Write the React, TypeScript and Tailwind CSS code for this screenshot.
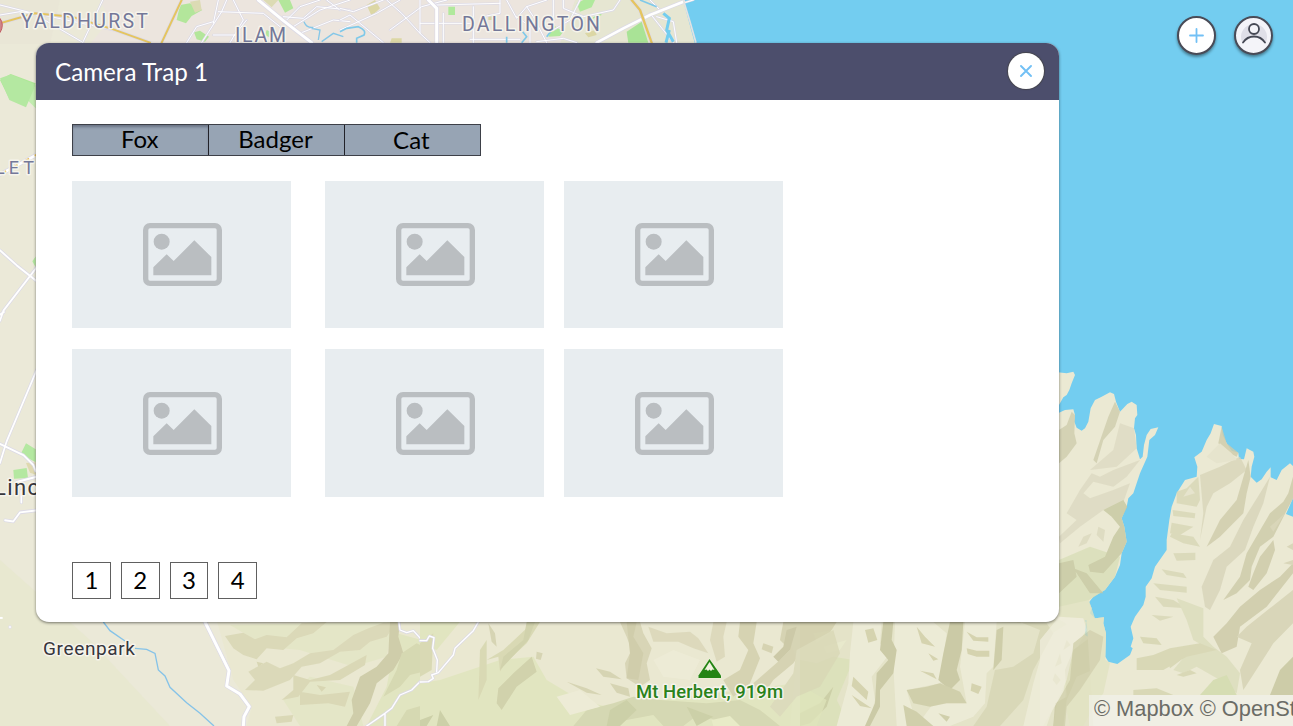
import React from 'react';

const tabs = [
  { name: 'Fox', cls: 'pb-[3px] shadow-[inset_0_3px_3px_-1px_rgba(60,65,85,0.5)]' },
  { name: 'Badger', cls: 'pb-[3px]' },
  { name: 'Cat', cls: 'pb-[1px]' },
];

function Road({ d, w = 4, c = '#ffffff' }: { d: string; w?: number; c?: string }) {
  return (
    <g fill="none" strokeLinejoin="round" strokeLinecap="round">
      <path d={d} stroke="#dcdae6" strokeWidth={w + 4} />
      <path d={d} stroke={c} strokeWidth={w} />
    </g>
  );
}

function Label(p: { x: number; y: number; size: number; w: number; fill: string; weight?: number; children: string }) {
  return (
    <text
      x={p.x}
      y={p.y}
      fontSize={p.size}
      textLength={p.w}
      fill={p.fill}
      fontWeight={p.weight ?? 500}
      fontFamily="Roboto, 'Liberation Sans', sans-serif"
      stroke="#f6f4ec"
      strokeWidth={3}
      strokeLinejoin="round"
      paintOrder="stroke"
    >
      {p.children}
    </text>
  );
}

function MapCanvas() {
  return (
    <svg className="absolute inset-0" width="1293" height="726" viewBox="0 0 1293 726" aria-hidden="true">
      <rect width="1293" height="726" fill="#ebe9d8" />
      <path d="M0 560L90 640 170 726H0z" fill="#e8e8d0" />
      <path d="M100 0H683L695 44H90L110 20z" fill="#ece5de" />
      <path d="M575 0H683L695 44H560z" fill="#e6e6d2" />
      <path d="M0 0H60L50 44H0z" fill="#e9e6d6" />
      <path d="M683 0L695 44 1050 380V560L1085 590V680H1293V0z" fill="#73cdf0" />

      {/* north-west streets */}
      <g transform="scale(.33333)">
        <path d="M540 15L570 10 607 30 575 48 558 70 530 60zM582 97L600 92 627 110 615 125 590 118zM835 0H870L880 25 855 38zM800 90L812 95 808 112 795 105z" fill="#b3e69b" />
        <path d="M570 5L600 0 605 30 585 38zM790 0H835L815 22z" fill="#dcdbb4" />
        <path d="M0 240L32 222 107 250 78 310 60 300 28 296z" fill="#aee797" />
        <path d="M82 300L107 255V325z" fill="#c2ecaf" />
        <Road d="M0 15L100 40 250 128M0 45L60 35 105 40 340 90" w={3} />
        <Road d="M308 0L248 128M680 0L665 35 605 128M640 70L655 0M640 65L590 80 560 128M655 35L790 40 840 80M700 0L730 60 690 128M720 105H640M740 60L700 110M860 60L900 20 960 0M880 80L960 30 1050 0M900 100L1000 60 1050 65M850 50L910 55 950 20 1050 30M980 0L1020 30" w={3} />
        <Road d="M775 0L850 62 935 128" w={9} />
        <Road d="M0 70L105 40 215 50 340 88 450 128M545 0L485 128" w={6} c="#e5c55f" />
        <path d="M912 65Q920 85 940 82M935 85L960 90 955 120M965 125L1000 100 1030 110" fill="none" stroke="#85c7e8" strokeWidth="4" />
        <path d="M0 55Q14 75 0 98" fill="#cf8588" stroke="#c15d64" strokeWidth="3" />
      </g>
      <g transform="translate(340 0) scale(.33333)">
        <path d="M325 20H345V45H325zM640 75L670 95 660 108 625 110zM710 10L730 0H765L755 22 720 35zM780 35L785 45 750 60z" fill="#b0e99c" />
        <path d="M860 95L905 65 925 128H865z" fill="#a9e396" />
        <path d="M80 15L105 0 120 25 95 48zM155 115H185V128H150zM735 100L765 90 770 105 745 112zM445 42H460V60H445z" fill="#dcd7a5" />
        <Road d="M0 25L40 35 130 0M0 60L30 45 130 128M0 90L110 40 180 0M140 0L185 40 240 100M150 90L245 20 320 0M240 0V70H400M240 70V100L270 128M290 15L480 10M310 40V128M400 20V128M480 0V40L440 48M500 0L530 55 560 20 620 0M530 50L570 80V128M560 20L580 50 620 128M640 0V80M640 90L690 60 720 0M390 118H540M670 0V25L730 50 820 30 840 0M590 125L670 115 710 128M930 40L1000 128M930 0L960 30 1060 0M950 50L1000 65 1010 128" w={3} />
        <Road d="M265 0L290 25V128" w={9} />
        <Road d="M1030 5L930 45 850 85 770 128" w={8} />
        <Road d="M875 0L900 30 935 128" w={7} c="#e5c55f" />
        <path d="M0 95L20 85 55 80Q80 90 72 105L50 115V128M500 128V110M548 95L560 110 545 128M640 85L620 110M900 0L950 20" fill="none" stroke="#7fc9e9" strokeWidth="5" />
        <path d="M970 40L988 55 980 90 1000 125M988 90L978 128" fill="none" stroke="#73cdf0" strokeWidth="9" />
        <path d="M1030 0L1050 65 1068 128" fill="none" stroke="#e3e2e2" strokeWidth="5" />
      </g>

      {/* western edge */}
      <g transform="translate(0 40) scale(.33333 .3953)">
        <path d="M78 1020L107 1035V1068L62 1048zM40 1088L80 1083 84 1108 42 1110zM97 560L107 548V575zM0 97L32 87 107 113 78 170 28 152z" fill="#b4e8a1" />
        <path d="M78 1070L107 1068V1100L90 1095z" fill="#dfd9b0" />
        <Road d="M0 340L110 290" w={7} />
        <path d="M0 340L110 290" stroke="#e8c160" strokeWidth="5" strokeDasharray="20 18" />
        <Road d="M0 532L50 570 110 610M110 575L10 685 0 710M0 695L12 688M110 835L20 1015 0 1070M0 1022L70 1050 100 1075 107 1090M50 1118L110 1105M64 1140V1170M15 1215L40 1218 60 1195 107 1190" w={5} />
        <circle cx="30" cy="1485" r="4" fill="#fff" stroke="#dcdae6" strokeWidth="2" />
        <path d="M0 1462H8" stroke="#fff" strokeWidth="5" />
      </g>

      {/* southern hills, west part */}
      <g transform="translate(0 600) scale(.33333)">
        <path d="M650 60H1300V378H740L755 320 700 240z" fill="#eae8d1" />
        <g opacity=".75">
          <path d="M690 75L1180 65 1160 170 1060 200 900 150 800 140zM850 300L930 230 1060 260 1090 378H900z" fill="#e3e6c4" />
          <path d="M1190 100L1300 130V378H1100L1160 260z" fill="#dfe4bc" />
          <path d="M675 108L730 98 765 118 800 105 860 112 905 70 980 66 940 100 890 115 850 150 800 145 770 178 730 165 700 145z" fill="#d6d4b0" />
          <path d="M745 215L800 185 840 205 880 190 930 160 1000 150 1060 105 1105 85 1150 68 1190 66 1160 110 1110 125 1080 150 1020 155 960 190 905 200 870 240 790 272 735 270 765 240z" fill="#d7d5b2" />
          <path d="M845 300L880 270 880 225 930 240 990 225 1100 165 1095 195 1020 240 930 245 895 290zM900 275L960 285 1050 275 1035 320 985 310 900 315zM825 350L880 345 875 365 830 370z" fill="#d5d3ae" />
          <path d="M1170 66H1200L1195 110 1210 160 1180 210 1130 250 1110 310 1070 378H1040L1060 340 1055 300 1080 230 1130 200 1165 160z" fill="#c6c49d" />
          <path d="M1205 160L1250 130 1290 150V210L1230 225 1200 260 1150 290 1190 210zM1220 330L1290 310V378H1190z" fill="#d0d4a8" />
          <path d="M950 255L978 262 965 275zM770 185L790 190 775 200z" fill="#d3d1aa" />
        </g>
        <path d="M310 66L330 92 375 123M405 145L440 148 465 160 475 210 495 228 510 262 560 308 600 340 642 378" fill="none" stroke="#86c3e8" strokeWidth="4" />
        <Road d="M615 66L687 212 680 258 720 282 748 320 732 350 730 378" w={9} />
        <Road d="M1197 66L1200 90 1220 98 1240 92 1270 125 1300 115M1300 240L1262 243 1235 270 1200 285 1175 325 1155 340 1100 378M1155 340V378" w={4} />
      </g>

      {/* southern hills, east part */}
      <g transform="translate(800 600) scale(.33333)">
        <path d="M0 60H780L880 120 900 378H0z" fill="#e4e3c8" />
        <g opacity=".8">
          <path d="M0 180L50 190 100 170 160 180 110 300 150 378H0z" fill="#dbe1b8" />
          <path d="M160 66H245L240 130 270 160 215 230 225 300 205 378H110L145 250 150 160zM285 66H400L440 100 420 250 320 270 340 340 400 378H290L280 200zM495 66H590L580 200 560 220 555 310 520 350 450 378H350L400 310 500 310 480 200z" fill="#efedda" />
          <path d="M740 110L820 60 860 66 850 110 800 200 795 300 760 320 740 378H670L700 250z" fill="#efedda" />
          <path d="M250 66H280L275 120 290 150 280 220 240 270 240 320 210 378H195L225 310 230 220 265 180 240 150zM450 66H490L485 150 470 210 480 240 450 270 415 240 430 160z" fill="#c6c59e" />
          <path d="M600 66H660L720 90 700 160 640 200 585 210 560 320 520 378H600L670 300 700 210 760 100 740 70z" fill="#d7d6b5" />
          <path d="M590 90L610 80 605 180 580 210zM820 150L900 90V200L830 230 800 300 790 378H760L765 310 800 290 795 210z" fill="#c9c8a2" />
          <path d="M500 95L530 112H565V125L520 122zM500 145L530 152H568V170H530L503 162zM350 80L375 110 405 140 365 130zM385 160L415 178 400 182zM360 212L400 220 410 238zM515 250L545 260 535 282 512 272zM160 230L205 275 200 300 155 258zM155 285L215 325 180 318zM195 90L220 85 232 120 205 128z" fill="#d2d0aa" />
          <path d="M320 270L380 260 420 250 480 275 500 310 440 310 390 320 340 310zM310 315L350 335 400 378H320zM415 340L450 350 440 365z" fill="#cccba5" />
          <path d="M780 160L785 190 765 200zM765 220L782 240 770 255 758 240zM800 120L812 135 790 150z" fill="#cfcda6" />
          <path d="M0 340L60 310 100 260 80 320 30 370 0 378z" fill="#c7cba0" />
          <path d="M70 140L140 120 120 150 80 160zM40 100L100 90 50 130z" fill="#e9ebce" />
        </g>
      </g>

      {/* southern hills, centre part */}
      <g transform="translate(420 600) scale(.33333)">
        <path d="M0 60H1090L1130 180 1110 378H0z" fill="#eae8d1" />
        <g opacity=".75">
          <path d="M0 65H120L50 150 0 130zM0 250L60 240 240 180 340 170 380 240 480 300 560 320 1130 250 1220 300 1190 378H0z" fill="#dfe5bb" />
          <path d="M0 130L40 100 35 210 0 230zM200 180L250 150 340 66H360L320 130 255 190 240 215 235 170zM180 150L200 120V240L175 300z" fill="#d4d5ab" />
          <path d="M320 66H345L325 120 240 210 250 170 310 120zM235 265L280 220 335 170 350 215 290 260 245 330 230 310z" fill="#c9cba0" />
          <path d="M205 70L225 100 230 140 215 125zM350 155L368 160 362 180 348 176zM528 205L570 215 605 238 550 230zM440 245L500 265 545 285 500 278zM570 250L625 265 630 290 590 278z" fill="#d0cea9" />
          <path d="M600 66H660L670 100 695 145 680 190 690 240 660 260 620 235 615 190 635 150 620 110z" fill="#d2cfad" />
          <path d="M620 66H650L640 110 670 160 655 240 620 235 630 160z" fill="#c8c59f" />
          <path d="M685 80L740 100 810 95 835 115 865 160 820 145 775 125 700 125zM880 66H920L910 110 915 170 890 185 870 120z" fill="#d9d5b6" />
          <path d="M960 66H1010L1000 130 1020 175 990 250 940 290 910 240 960 210 985 150 955 110z" fill="#d0cda8" />
          <path d="M1090 66H1250L1210 130 1150 145 1120 190 1060 240 1020 300 1000 250 1080 180 1110 150 1080 120z" fill="#d0cda9" />
          <path d="M1100 90L1130 80 1110 150 1075 185 1060 170 1090 140z" fill="#c2bf99" />
          <path d="M1130 150L1240 90 1260 160 1200 260 1130 290 1080 350 1050 320 1120 220z" fill="#d8d7b5" />
          <path d="M460 378L500 330 580 310 640 290 720 300 860 310 960 300 1020 330 1080 378H920L840 340 790 378H730L700 345 620 360 560 378z" fill="#cfd3a9" />
          <path d="M0 360L40 345 20 378H0zM60 330L90 378H50zM570 330L620 300 650 330 600 378H560zM800 320L880 350 830 378z" fill="#c3c99b" />
          <path d="M1030 130L1060 140 1055 160 1025 148z" fill="#d0cda8" />
          <path d="M410 290L480 270 540 320 450 345zM700 180L760 150 840 180 810 240 730 230z" fill="#efedd8" />
          <path d="M875 360L930 348 960 378H880z" fill="#e8edc4" />
        </g>
        <Road d="M175 66L160 92 105 145 100 165 55 218 35 225 40 235 25 245 0 246M0 122L20 122 28 108 42 113 38 145 52 180 50 215" w={4} />
      </g>

      {/* peninsula */}
      <g transform="translate(1040 360) scale(.33333)">
        <path d="M40 35L80 40 100 35 105 45 95 70 88 90 80 105 70 112 57 135V158L75 150 100 148 105 165 103 185 110 203 125 212 135 205 145 185 152 145 165 120 185 110 210 97 222 102 228 125 240 155 262 132 275 125 290 135 292 165 285 175 282 205 288 225 290 265 300 298 308 290 312 255 320 225 332 207 355 202 345 225 328 240 322 290 300 340 280 400 265 415 260 440 245 475 253 500 260 545 245 580 240 615 225 650 195 690 160 710 147 727 155 745 150 760 165 775 192 772 190 790 198 820 196 890 205 905 232 912 270 885 278 865 272 860 280 835 272 800 285 770 310 735 317 710V680L335 655 345 620 380 570V540L388 480 395 440 410 400 435 360 470 350 472 320 463 292 485 275 500 240 512 220 522 192 545 198 548 225 560 250 575 272 595 278 597 297 612 298 620 265 640 275 643 290 635 320 632 350 650 368 665 358 680 335 692 322V352L710 360 725 330 750 310 759 318V415L738 462 759 470V1098H160L140 780H30z" fill="#ebe9d3" />
        <g opacity=".8">
          <path d="M57 700L140 700 155 745 165 775 192 772 190 790 198 820 196 900 210 908 190 1000 160 1040 130 1098H90L70 1000 90 850 57 780z" fill="#e2e3c2" />
          <path d="M57 600L150 560 240 590 225 650 195 690 147 720 57 740z" fill="#d9dfb8" />
          <path d="M57 770L130 775 140 810 100 870 80 960 50 1030 10 1098H0V840z" fill="#efeddb" />
          <path d="M100 850L150 810 190 830 180 900 120 990 80 1040 75 1098H40L50 1030 90 960z" fill="#d1d0ac" />
          <path d="M57 310V210L80 195 95 155 105 165 103 220 110 250 80 290zM205 170L225 125 240 155 225 200 190 240 170 310 160 300z" fill="#cfcdad" />
          <path d="M240 190L282 205 290 265 230 320 150 330 220 270z" fill="#dedbc3" />
          <path d="M155 340L180 350 220 330 300 300 260 350 220 380 160 365 130 400 150 415 220 390 270 370 245 440 190 450 120 500 60 550 57 530 110 480 80 460 120 390z" fill="#dddac2" />
          <path d="M190 450L250 420 262 440 245 475 253 500 260 545 245 580 190 640 150 635 145 615 195 590 220 530 240 500 215 470zM57 610L100 600 110 650 57 700zM100 625L140 640 190 700 150 700z" fill="#c6c8a0" />
          <path d="M130 530L155 520 140 550 115 560zM175 500L195 510 190 545 170 525z" fill="#dcd9bf" />
          <path d="M410 395L440 385 475 350 480 420 470 440 410 430zM398 450L466 460 464 475 400 468zM395 488L460 500 420 525 390 520zM395 520L460 530 480 560 430 550 390 530zM400 580L466 578V600L410 602zM365 628L430 640 440 655 380 645zM340 670L440 680 440 698 360 690zM345 710L400 720 440 745 370 740zM335 765L400 770 360 782z" fill="#d8d7b6" />
          <path d="M480 345L540 320 600 290 620 330 570 370 520 400 500 440 480 540 490 460z" fill="#d9d6ba" />
          <path d="M545 200L560 250 595 278 590 290 560 275 535 250zM625 300L632 350 620 400 610 460 580 490 540 530 500 560 540 480 590 420z" fill="#cfccab" />
          <path d="M485 680L520 600 570 560 610 480 660 400 690 350 670 430 640 500 615 570 560 620 540 690 510 750 495 740z" fill="#d8d5ba" />
          <path d="M690 460L730 425 745 400 759 350V415L738 455 700 530 660 560 635 620 630 660 590 700 550 720 600 650 620 580z" fill="#cdcaa8" />
          <path d="M640 640L660 590 700 540 705 570 680 640 640 690 625 680zM560 790L600 740 660 690 720 650 759 610V640L680 740 600 800 590 860 545 880 520 830z" fill="#ccc9a7" />
          <path d="M740 560L759 550V570zM730 610L759 600V615zM690 500L735 460 700 515zM590 830L620 800 759 690V790L700 850 655 920 610 990 600 930 635 850z" fill="#d5d2b3" />
          <path d="M410 715L490 745 490 830 520 860 560 890 600 940 590 1000 540 960 470 920 430 940 400 930 450 870 510 870 460 840 440 780z" fill="#dcddbc" />
          <path d="M300 830L350 835 365 855 310 850zM290 895L340 885 390 865 480 850 530 870 440 890 370 930 290 930zM385 905L430 895 390 925zM410 945L450 930 470 940 430 950zM280 990L350 985 400 1005H280z" fill="#d5d5b0" />
          <path d="M759 890L720 930 690 1005H759z" fill="#c6c69e" />
          <path d="M520 960L560 945 590 1005H480z" fill="#d2dbac" />
          <path d="M540 250L575 280 590 300 530 310 500 290zM450 380L465 400 430 410z" fill="#e6e3cc" />
        </g>
      </g>

      <Label x={21} y={27.5} size={19.5} w={127} weight={400} fill="#747899">YALDHURST</Label>
      <Label x={235} y={41.5} size={19.5} w={51} weight={400} fill="#747899">ILAM</Label>
      <Label x={462} y={30.5} size={19.5} w={138} weight={400} fill="#747899">DALLINGTON</Label>
      <Label x={-5} y={173.5} size={18} w={39} weight={400} fill="#747899">LET</Label>
      <Label x={-6} y={495} size={22} w={45} weight={400} fill="#36363c">Linc</Label>
      <Label x={43} y={655} size={19} w={92} weight={400} fill="#36363c">Greenpark</Label>
      <Label x={636} y={697.5} size={18.5} w={147} fill="#2a821b">Mt Herbert, 919m</Label>
      <path d="M709.5 659L698.5 675.5V678H721V675.5z" fill="#248414" stroke="#edf1db" strokeWidth="1.2" paintOrder="stroke" />
      <path d="M709.5 662L704.5 670 706.5 669.5 708 671 709.5 669.5 711 671 712.5 669.5 714.5 670z" fill="#f2f2e0" />
    </svg>
  );
}

function Picture() {
  return (
    <div className="flex h-[147.5px] items-center justify-center bg-[#e8edf0]">
      <svg className="ml-px h-[63px] w-[79px]" viewBox="0 0 237 189">
        <rect x="8" y="8" width="221" height="173" rx="13" fill="none" stroke="#babec1" strokeWidth="16" />
        <circle cx="56" cy="56" r="24" fill="#babec1" />
        <path d="M31 157V133L71 94 92 114 154 52 205 102V157z" fill="#babec1" />
      </svg>
    </div>
  );
}

export default function App() {
  return (
    <div className="relative h-[726px] w-[1293px] overflow-hidden font-['Lato',sans-serif]">
      <MapCanvas />
      <div className="relative flex items-start pl-9">
        <section className="mt-[43px] flex h-[578.5px] w-[1023px] flex-col overflow-hidden rounded-[13px] bg-white shadow-[0_1px_3px_rgba(0,0,0,0.5)]">
          <header className="flex h-[56.5px] shrink-0 items-center justify-between bg-[#4c4e6c] pr-[15px] pl-[19px]">
            <h1 className="pt-px text-[24.2px] leading-8 text-white">Camera Trap 1</h1>
            <button className="flex size-[36px] items-center justify-center rounded-full bg-white shadow-[0_0_1px_1px_#45454d]">
              <svg width="12" height="12" viewBox="0 0 12 12" fill="none" stroke="#72c0f5" strokeWidth="1.9" strokeLinecap="round">
                <path d="M1 1L11 11M11 1L1 11" />
              </svg>
            </button>
          </header>
          <div className="flex grow flex-col items-start pt-[24.5px] pl-9">
            <div className="flex h-8 w-[408.5px] divide-x divide-[#222229] border border-[#3d4048] bg-[#97a4b4]">
              {tabs.map((t) => (
                <button key={t.name} className={`flex-1 pr-[1.5px] text-[24px] leading-7 text-black ${t.cls}`}>
                  {t.name}
                </button>
              ))}
            </div>
            <div className="mt-[24.7px] grid grid-cols-[219px_219px_219px] gap-y-[21.1px]">
              {[0, 1, 2, 3, 4, 5].map((i) => (
                <div key={i} className={i % 3 === 1 ? 'ml-[34.4px] w-[219px]' : i % 3 === 2 ? 'ml-[54px] w-[219px]' : ''}>
                  <Picture />
                </div>
              ))}
            </div>
            <div className="mt-[65px] flex gap-[10px]">
              {[1, 2, 3, 4].map((n) => (
                <button key={n} className="h-[37px] w-[38.8px] border border-[#606060] text-[24px] leading-8 text-black">
                  {n}
                </button>
              ))}
            </div>
          </div>
        </section>
        <nav className="ml-[118px] flex gap-[18px] pt-4">
          <button className="flex size-[39px] items-center justify-center rounded-full border-2 border-[#494b57] bg-white shadow-[0_2px_3px_rgba(0,0,0,0.4)]">
            <svg width="16" height="16" viewBox="0 0 16 16" fill="none" stroke="#72c0f5" strokeWidth="1.8" strokeLinecap="round">
              <path d="M7.500 1V14M1 7.500H14" />
            </svg>
          </button>
          <button className="flex size-[39px] items-center justify-center rounded-full border-2 border-[#494b57] bg-[#f4f4f9] shadow-[0_2px_3px_rgba(0,0,0,0.4)]">
            <svg className="shrink-0" width="36" height="36" viewBox="0 0 36 36" fill="none">
              <path d="M6 24A13 13 0 1 1 30 24Q24 18.500 18 18.500T6 24z" fill="#dfdfe8" />
              <circle cx="18" cy="11" r="5" fill="#f4f4f9" stroke="#454854" strokeWidth="1.8" />
              <path d="M7 24.500Q11 18.500 18 18.500T29 24.500" stroke="#454854" strokeWidth="1.8" strokeLinecap="round" />
            </svg>
          </button>
        </nav>
      </div>
      <div className="absolute right-0 bottom-0 h-[31px] w-[204px] overflow-hidden bg-[#f3f3ec]/65 pl-[5px] font-['Liberation_Sans',sans-serif] text-[21.8px] leading-[28px] whitespace-nowrap text-[#6b6c66]">
        © Mapbox © OpenSt
      </div>
    </div>
  );
}
